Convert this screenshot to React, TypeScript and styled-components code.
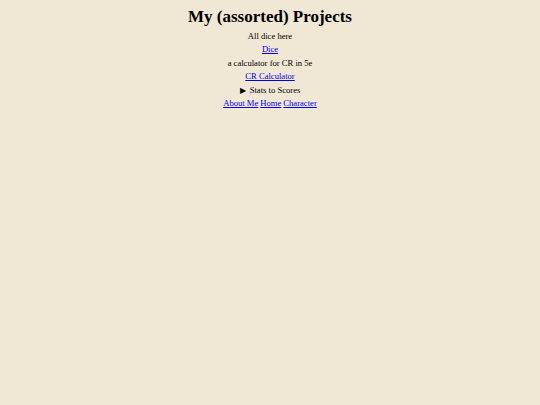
import styled, { createGlobalStyle } from 'styled-components';

const GlobalStyle = createGlobalStyle`
  html, body {
    margin: 0;
    background: #f1e7d5;
  }
  body {
    font-family: "Liberation Serif", "Times New Roman", serif;
    color: #000;
  }
`;

const Page = styled.div`
  display: flex;
  flex-direction: column;
  align-items: center;
  padding-top: 6px;
  text-align: center;
`;

const Title = styled.h1`
  font-size: 17px;
  font-weight: 700;
  margin: 0 0 3px;
  line-height: 21px;
`;

const Line = styled.div`
  font-size: 8.6px;
  line-height: 13.4px;
`;

const Link = styled.a`
  color: #0000ee;
  text-decoration: underline;
  font-size: 8.6px;
`;

const Details = styled.details`
  font-size: 8.6px;
  line-height: 13.4px;
  summary {
    list-style: none;
    cursor: pointer;
  }
  summary::-webkit-details-marker {
    display: none;
  }
`;

const Arrow = styled.span`
  font-size: 8px;
  margin-right: 4px;
`;

const Nav = styled.div`
  font-size: 8.6px;
  line-height: 13.4px;
  display: flex;
  gap: 2px;
`;

const App = () => {
  return (
    <>
      <GlobalStyle />
      <Page>
        <Title>My (assorted) Projects</Title>
        <Line>All dice here</Line>
        <Line><Link href="#">Dice</Link></Line>
        <Line>a calculator for CR in 5e</Line>
        <Line><Link href="#">CR Calculator</Link></Line>
        <Details>
          <summary><Arrow>▶</Arrow>Stats to Scores</summary>
        </Details>
        <Nav>
          <Link href="#">About Me</Link>
          <Link href="#">Home</Link>
          <Link href="#">Character</Link>
        </Nav>
      </Page>
    </>
  );
};

export default App;
